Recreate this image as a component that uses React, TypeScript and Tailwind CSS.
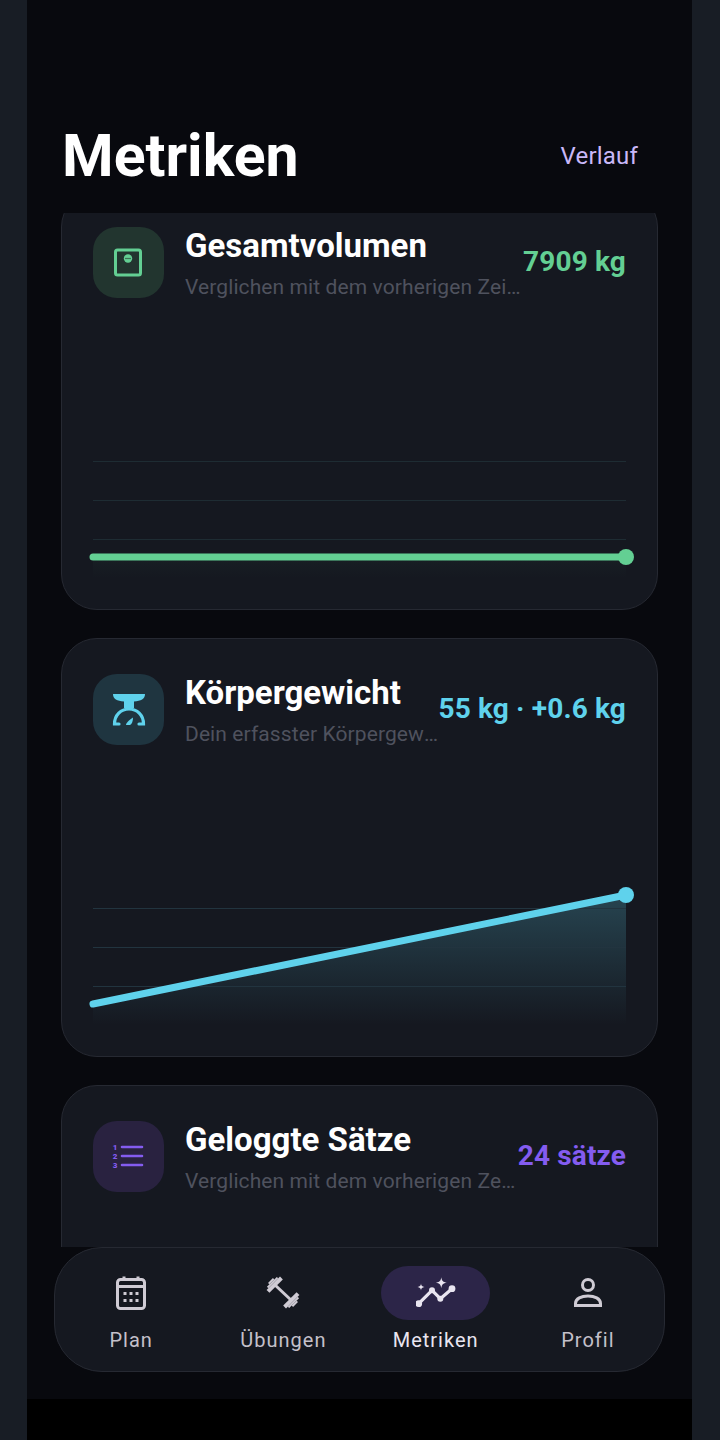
const FONT = "font-['Roboto','Noto_Sans',sans-serif]";

type Metric = {
  title: string;
  subtitle: string;
  value: string;
  color: string;
  valueClass: string;
  tileClass: string;
  icon: React.ReactNode;
  from: number;
  to: number;
  fillId: string;
  grid: string;
};

function VolumeIcon() {
  return (
    <svg width="71" height="71" viewBox="0 0 71 71" fill="none">
      <rect x="22.500" y="23" width="25" height="25" rx="2" stroke="#63cf93" strokeWidth="3" />
      <circle cx="35" cy="31.500" r="4.200" fill="#63cf93" />
      <circle cx="33" cy="31.500" r="0.700" fill="#22352f" />
      <circle cx="35" cy="31.500" r="0.700" fill="#22352f" />
      <circle cx="37" cy="31.500" r="0.700" fill="#22352f" />
    </svg>
  );
}

function BodyWeightIcon() {
  return (
    <svg width="71" height="71" viewBox="0 0 71 71" fill="none">
      <path d="M20 20H52C52 25 48 27 41 27.500V34H31V27.500C24 27 20 25 20 20Z" fill="#5fd2ec" />
      <path d="M26 50H21.500C21.500 41 28 35 36 35S50.500 41 50.500 50H46" stroke="#5fd2ec" strokeWidth="3.200" strokeLinecap="round" />
      <path d="M40 43.500C40 47 39 50 37 51H33C33 49 36 46 40 43.500Z" fill="#5fd2ec" />
    </svg>
  );
}

function SetsIcon() {
  return (
    <svg width="71" height="71" viewBox="0 0 71 71" fill="none">
      <path d="M29 26H49M29 35H49M29 44H49" stroke="#845cf0" strokeWidth="2.600" strokeLinecap="round" />
      <text x="22" y="29" textAnchor="middle" fill="#845cf0" fontSize="8" fontWeight="900" fontFamily="Roboto">1</text>
      <text x="22" y="38" textAnchor="middle" fill="#845cf0" fontSize="8" fontWeight="900" fontFamily="Roboto">2</text>
      <text x="22" y="47" textAnchor="middle" fill="#845cf0" fontSize="8" fontWeight="900" fontFamily="Roboto">3</text>
    </svg>
  );
}

function Chart(props: { color: string; from: number; to: number; fillId: string; grid: string }) {
  const { color, from, to, fillId, grid } = props;
  return (
    <svg width="533" height="247" viewBox="0 0 533 247" fill="none" className="mt-[33px] overflow-visible">
      <defs>
        <linearGradient id={fillId} x1="0" y1="116" x2="0" y2="247" gradientUnits="userSpaceOnUse">
          <stop offset="0" stopColor={color} stopOpacity="0.24" />
          <stop offset="1" stopColor={color} stopOpacity="0" />
        </linearGradient>
      </defs>
      <path d={`M0 ${from}L533 ${to}V247H0Z`} fill={`url(#${fillId})`} />
      {[130, 169, 208].map((y) => (
        <line key={y} x1="0" x2="533" y1={y + 0.5} y2={y + 0.5} stroke={grid} />
      ))}
      <line x1="0" y1={from} x2="533" y2={to} stroke={color} strokeWidth="7" strokeLinecap="round" />
      <circle cx="533" cy={to} r="8" fill={color} />
    </svg>
  );
}

const metrics: Metric[] = [
  {
    title: "Gesamtvolumen",
    subtitle: "Verglichen mit dem vorherigen Zeitraum",
    value: "7909 kg",
    color: "#63cf93",
    valueClass: "text-[#63cf93]",
    tileClass: "bg-[#22352f]",
    icon: <VolumeIcon />,
    from: 226,
    to: 226,
    fillId: "fill-volume",
    grid: "#1e2c33",
  },
  {
    title: "Körpergewicht",
    subtitle: "Dein erfasster Körpergewicht-Verlauf",
    value: "55 kg · +0.6 kg",
    color: "#5fd2ec",
    valueClass: "text-[#5fd2ec]",
    tileClass: "bg-[#1f3540]",
    icon: <BodyWeightIcon />,
    from: 226,
    to: 117,
    fillId: "fill-weight",
    grid: "#22343f",
  },
  {
    title: "Geloggte Sätze",
    subtitle: "Verglichen mit dem vorherigen Zeitraum",
    value: "24 sätze",
    color: "#845cf0",
    valueClass: "text-[#845cf0]",
    tileClass: "bg-[#292240]",
    icon: <SetsIcon />,
    from: 200,
    to: 140,
    fillId: "fill-sets",
    grid: "#25233a",
  },
];

function MetricCard({ metric }: { metric: Metric }) {
  return (
    <div className="h-[419px] shrink-0 rounded-[36px] border border-[#262932] bg-[#151820] px-[31px] pt-[34px]">
      <div className="flex h-[72px] items-center">
        <div className={`flex h-[71px] w-[71px] shrink-0 items-center justify-center rounded-[24px] ${metric.tileClass}`}>
          {metric.icon}
        </div>
        <div className="ml-[21px] min-w-0 flex-1 self-start">
          <div className="truncate text-[33px] leading-[40px] font-bold text-white">{metric.title}</div>
          <div className="mt-[7px] truncate text-[21px] leading-[28px] tracking-[0.1px] text-[#4f525e]">{metric.subtitle}</div>
        </div>
        <div className={`shrink-0 text-[28px] font-bold tracking-[0.15px] whitespace-nowrap ${metric.valueClass}`}>{metric.value}</div>
      </div>
      <Chart color={metric.color} from={metric.from} to={metric.to} fillId={metric.fillId} grid={metric.grid} />
    </div>
  );
}

function CalendarIcon() {
  return (
    <svg width="36" height="36" viewBox="0 0 36 36" fill="none">
      <path d="M11 1.500V6M25 1.500V6" stroke="#cfcbd4" strokeWidth="3" />
      <rect x="4.500" y="4.500" width="27" height="29" rx="3" stroke="#cfcbd4" strokeWidth="3" />
      <path d="M4.500 11.500H31.500" stroke="#cfcbd4" strokeWidth="3" />
      {[12, 18, 24].map((x) =>
        [18.5, 25.5].map((y) => <rect key={`${x}-${y}`} x={x - 1.500} y={y - 1.500} width="3" height="3" fill="#cfcbd4" />)
      )}
    </svg>
  );
}

function BarbellPlate(props: { transform: string }) {
  return (
    <g transform={props.transform}>
      <rect x="-1" y="-9.500" width="4" height="19" />
      <rect x="-3" y="-7" width="2" height="14" />
      <rect x="-5" y="-3.500" width="2" height="7" />
    </g>
  );
}

function BarbellIcon() {
  return (
    <svg width="36" height="36" viewBox="0 0 36 36" fill="#cfcbd4">
      <path d="M9 9L27 26" stroke="#cfcbd4" strokeWidth="3" />
      <BarbellPlate transform="translate(9 9) rotate(45)" />
      <BarbellPlate transform="translate(27 26) rotate(225)" />
    </svg>
  );
}

function MetricsIcon() {
  return (
    <svg width="40" height="36" viewBox="0 0 40 36" fill="none">
      <path d="M2.700 28.700L16 15.300L24.300 23.700L36 13.700" stroke="#e9e5f0" strokeWidth="3.200" strokeLinejoin="round" />
      <circle cx="2.700" cy="28.700" r="3.400" fill="#e9e5f0" />
      <circle cx="16" cy="15.300" r="3" fill="#e9e5f0" />
      <circle cx="24.300" cy="23.700" r="3" fill="#e9e5f0" />
      <circle cx="36" cy="13.700" r="3.400" fill="#e9e5f0" />
      <path d="M25.300 2.200C25.800 5.800 27 7 30.800 7.700 27 8.300 25.800 9.500 25.300 13.200 24.800 9.500 23.600 8.300 19.800 7.700 23.600 7 24.800 5.800 25.300 2.200Z" fill="#e9e5f0" />
      <path d="M5 8.500C5.300 10.700 5.800 11.300 8.500 12 5.800 12.700 5.300 13.300 5 15.500 4.700 13.300 4.200 12.700 1.500 12 4.200 11.300 4.700 10.700 5 8.500Z" fill="#e9e5f0" />
    </svg>
  );
}

function ProfileIcon() {
  return (
    <svg width="36" height="36" viewBox="0 0 36 36" fill="none">
      <circle cx="18" cy="10" r="5.500" stroke="#cfcbd4" strokeWidth="3" />
      <path d="M5.500 30.500V28.500C5.500 23.500 11.500 21 18 21S30.500 23.500 30.500 28.500V30.500Z" stroke="#cfcbd4" strokeWidth="3" />
    </svg>
  );
}

const navItems = [
  { label: "Plan", icon: <CalendarIcon /> },
  { label: "Übungen", icon: <BarbellIcon /> },
  { label: "Metriken", icon: <MetricsIcon />, active: true },
  { label: "Profil", icon: <ProfileIcon /> },
];

export default function App() {
  return (
    <div className={`flex h-[1440px] w-[720px] overflow-hidden bg-[#181d25] ${FONT}`}>
      <div className="w-[27px] shrink-0" />
      <div className="h-[1440px] w-[665px] shrink-0 bg-black">
        <div className="flex h-[1399px] flex-col bg-[#08090e]">
          <div className="flex h-[213px] shrink-0 items-start justify-between pt-[122px] pr-[54px] pl-[35px]">
            <h1 className="text-[59px] leading-[68px] font-bold text-white">Metriken</h1>
            <button className="mt-[16px] text-[24px] leading-[36px] tracking-[0.2px] text-[#c9b8f8]">Verlauf</button>
          </div>
          <div className="h-[1034px] shrink-0 overflow-hidden px-[34px]">
            <div className="-mt-[22px] flex flex-col gap-[28px]">
              {metrics.map((metric) => (
                <MetricCard key={metric.title} metric={metric} />
              ))}
            </div>
          </div>
          <nav className="mx-[27px] grid h-[125px] shrink-0 grid-cols-4 rounded-[48px] border border-[#262932] bg-[#151820] pt-[18px]">
            {navItems.map((item) => (
              <div key={item.label} className="flex flex-col items-center">
                <div
                  className={`flex h-[54px] w-[109px] items-center justify-center rounded-full ${
                    item.active ? "bg-[#2c2548]" : ""
                  }`}
                >
                  {item.icon}
                </div>
                <div
                  className={`mt-[8px] text-[20px] leading-[24px] tracking-[1px] ${
                    item.active ? "text-[#e9e5f0]" : "text-[#c4c0ca]"
                  }`}
                >
                  {item.label}
                </div>
              </div>
            ))}
          </nav>
        </div>
      </div>
    </div>
  );
}
